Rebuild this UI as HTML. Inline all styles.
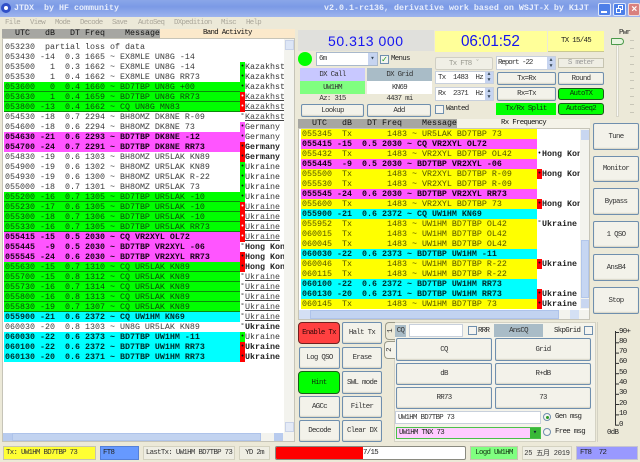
<!DOCTYPE html>
<html><head><meta charset="utf-8"><style>
*{box-sizing:border-box;margin:0;padding:0}
html{background:#ece9d8}
html,body{width:640px;height:462px;overflow:hidden}
body{position:relative;background:#ece9d8;font-family:"Liberation Mono","Noto Sans CJK SC",monospace;font-size:7.4px;letter-spacing:-.69px;color:#222;filter:blur(.3px)}
.a{position:absolute;white-space:pre}
.b{position:absolute;display:flex;align-items:center;justify-content:center;white-space:pre;border:1px solid #6f8fae;border-radius:2px;background:#f3f2ea;color:#333;box-shadow:inset 0 -1px 1px #d8d6c8}
.f{position:absolute;display:flex;align-items:center;justify-content:center;white-space:pre;color:#333}
.h{font-size:8.33px;letter-spacing:0}
.l{position:absolute;overflow:hidden;background:#fff;font-size:8.33px;letter-spacing:0}
.r{position:relative;height:10px;line-height:10px;white-space:pre;color:#444}
.r u{text-decoration:none;position:absolute;left:236px;width:5px;height:10px;text-align:center;color:#111;font-size:7px}
.r i{font-style:normal;position:absolute;left:241px;color:#333;background:#fff;padding-right:40px}
.r s{text-decoration:none;display:block;width:236px;height:10px;padding-left:1px}
.g s{background:#00ff00;box-shadow:inset 0 -1px #0a8a0a;color:#0c440c}
.g i{text-decoration:underline;color:#444}
.p s{background:#ff55ff;color:#180018;font-weight:700}
.c s{background:#00ffff;color:#002c2c;font-weight:700}
.y s{background:#ffff00;color:#555500}
.p i,.c i{font-weight:700;color:#222}
.n s{color:#3a3a3a}
.R{background:#ff0000}.G{background:#00ff00}.M{background:#ff55ff}
.cb{position:absolute;width:9px;height:9px;border:1px solid #6f8fae;background:#f4f4f0}
.rd{position:absolute;width:8px;height:8px;border-radius:50%;border:1px solid #6f8fae;background:#f5f5f0}
.m{position:absolute;top:19px;color:#aaa69a;white-space:pre;line-height:9px}
.sc{position:absolute;line-height:8px}
</style></head><body>
<div class="a" style="left:0;top:0;width:640px;height:17px;background:linear-gradient(#8aa6e8,#7b9ae6 40%,#9db4ee)"></div>
<div class="a" style="left:1px;top:3px;width:10px;height:10px;border-radius:50%;background:#fff;border:3px solid #3050c8"></div>
<div class="a h" style="left:14px;top:3px;color:#e8eefc;font-weight:700">JTDX  by HF community</div>
<div class="a h" style="left:324px;top:3px;color:#e8eefc;font-weight:700">v2.0.1-rc136, derivative work based on WSJT-X by K1JT</div>
<div class="a" style="left:598px;top:3px;width:13px;height:13px;background:#4d7fe8;border:1px solid #dfe8fb;border-radius:2px"></div>
<div class="a" style="left:601px;top:11px;width:6px;height:2px;background:#fff"></div>
<div class="a" style="left:613px;top:3px;width:13px;height:13px;background:#4d7fe8;border:1px solid #dfe8fb;border-radius:2px"></div>
<div class="a" style="left:618px;top:5px;width:5px;height:5px;border:1px solid #fff"></div>
<div class="a" style="left:616px;top:8px;width:5px;height:5px;border:1px solid #fff;background:#4d7fe8"></div>
<div class="a" style="left:628px;top:3px;width:12px;height:13px;background:#d9807e;border:1px solid #f0dada;border-radius:2px;color:#fff;font:700 10px/11px 'Liberation Sans',sans-serif;text-align:center">×</div>
<div class="m" style="left:5px">File</div><div class="m" style="left:30px">View</div><div class="m" style="left:55px">Mode</div><div class="m" style="left:80px">Decode</div><div class="m" style="left:112px">Save</div><div class="m" style="left:138px">AutoSeq</div><div class="m" style="left:174px">DXpedition</div><div class="m" style="left:221px">Misc</div><div class="m" style="left:246px">Help</div>

<div class="a" style="left:2px;top:29px;width:158px;height:9px;background:#a6a6a2"></div>
<div class="a" style="left:160px;top:29px;width:135px;height:9px;background:#fbe9cb"></div>
<div class="a h" style="left:15px;top:29px;line-height:9px;color:#111">UTC   dB   DT Freq    Message</div>
<div class="a" style="left:203px;top:29px;line-height:9px;color:#111">Band Activity</div>
<div class="a" style="left:2px;top:38px;width:293px;height:404px;background:#fff;border:1px solid #c6c4b8"></div>
<div class="l" style="left:4px;top:42px;width:280px;height:320px">
<div class="r n"><s>053230  partial loss of data</s></div>
<div class="r n"><s>053430 -14  0.3 1665 ~ EX8MLE UN8G -14</s><u class="G">•</u><i>Kazakhst</i></div>
<div class="r n"><s>053500   1  0.3 1662 ~ EX8MLE UN8G -14</s><u class="G">•</u><i>Kazakhst</i></div>
<div class="r n"><s>053530   1  0.4 1662 ~ EX8MLE UN8G RR73</s><u class="G">•</u><i>Kazakhst</i></div>
<div class="r g"><s>053600   0  0.4 1660 ~ BD7TBP UN8G +00</s><u class="R" style="color:#fff">•</u><i>Kazakhst</i></div>
<div class="r g"><s>053630   1  0.4 1659 ~ BD7TBP UN8G RR73</s><u class="R" style="color:#fff">•</u><i>Kazakhst</i></div>
<div class="r g"><s>053800 -13  0.4 1662 ~ CQ UN8G MN83</s><u>°</u><i>Kazakhst</i></div>
<div class="r n"><s>054530 -18  0.7 2294 ~ BH8OMZ DK8NE R-09</s><u class="M">•</u><i>Germany</i></div>
<div class="r n"><s>054600 -18  0.6 2294 ~ BH8OMZ DK8NE 73</s><u class="M">•</u><i>Germany</i></div>
<div class="r p"><s>054630 -21  0.6 2293 ~ BD7TBP DK8NE -12</s><u class="R">•</u><i>Germany</i></div>
<div class="r p"><s>054700 -24  0.7 2291 ~ BD7TBP DK8NE RR73</s><u class="R">•</u><i>Germany</i></div>
<div class="r n"><s>054830 -19  0.6 1303 ~ BH8OMZ UR5LAK KN89</s><u class="G">•</u><i>Ukraine</i></div>
<div class="r n"><s>054900 -19  0.6 1302 ~ BH8OMZ UR5LAK KN89</s><u class="G">•</u><i>Ukraine</i></div>
<div class="r n"><s>054930 -19  0.6 1300 ~ BH8OMZ UR5LAK R-22</s><u class="G">•</u><i>Ukraine</i></div>
<div class="r n"><s>055000 -18  0.7 1301 ~ BH8OMZ UR5LAK 73</s><u class="G">•</u><i>Ukraine</i></div>
<div class="r g"><s>055200 -16  0.7 1305 ~ BD7TBP UR5LAK -10</s><u class="R" style="color:#fff">•</u><i>Ukraine</i></div>
<div class="r g"><s>055230 -17  0.6 1305 ~ BD7TBP UR5LAK -10</s><u class="R" style="color:#fff">•</u><i>Ukraine</i></div>
<div class="r g"><s>055300 -18  0.7 1306 ~ BD7TBP UR5LAK -10</s><u class="R" style="color:#fff">•</u><i>Ukraine</i></div>
<div class="r g"><s>055330 -16  0.7 1305 ~ BD7TBP UR5LAK RR73</s><u class="R" style="color:#fff">•</u><i>Ukraine</i></div>
<div class="r p"><s>055415 -15  0.5 2030 ~ CQ VR2XYL OL72</s><u>°</u><i>Hong Kon</i></div>
<div class="r p"><s>055445  -9  0.5 2030 ~ BD7TBP VR2XYL -06</s><u class="R">•</u><i>Hong Kon</i></div>
<div class="r p"><s>055545 -24  0.6 2030 ~ BD7TBP VR2XYL RR73</s><u class="R">•</u><i>Hong Kon</i></div>
<div class="r g"><s>055630 -15  0.7 1310 ~ CQ UR5LAK KN89</s><u>°</u><i>Ukraine</i></div>
<div class="r g"><s>055700 -15  0.8 1312 ~ CQ UR5LAK KN89</s><u>°</u><i>Ukraine</i></div>
<div class="r g"><s>055730 -16  0.7 1314 ~ CQ UR5LAK KN89</s><u>°</u><i>Ukraine</i></div>
<div class="r g"><s>055800 -16  0.8 1313 ~ CQ UR5LAK KN89</s><u>°</u><i>Ukraine</i></div>
<div class="r g"><s>055830 -19  0.7 1307 ~ CQ UR5LAK KN89</s><u>°</u><i>Ukraine</i></div>
<div class="r c"><s>055900 -21  0.6 2372 ~ CQ UW1HM KN69</s><u>°</u><i>Ukraine</i></div>
<div class="r n"><s>060030 -20  0.8 1303 ~ UN8G UR5LAK KN89</s><u class="G">•</u><i>Ukraine</i></div>
<div class="r c"><s>060030 -22  0.6 2373 ~ BD7TBP UW1HM -11</s><u class="R">•</u><i>Ukraine</i></div>
<div class="r c"><s>060100 -22  0.6 2372 ~ BD7TBP UW1HM RR73</s><u class="R">•</u><i>Ukraine</i></div>
<div class="r c"><s>060130 -20  0.6 2371 ~ BD7TBP UW1HM RR73</s><u class="R">•</u><i>Ukraine</i></div>
</div>
<div class="a" style="left:284px;top:39px;width:10px;height:402px;background:#f3f3ee"></div>
<div class="a" style="left:285px;top:40px;width:9px;height:10px;background:#dde6f6;border:1px solid #c8d2e8"></div>
<div class="a" style="left:285px;top:422px;width:9px;height:10px;background:#e4eaf6;border:1px solid #c8d2e8"></div>
<div class="a" style="left:3px;top:433px;width:291px;height:8px;background:#f3f3ee"></div>
<div class="a" style="left:3px;top:433px;width:9px;height:8px;background:#b8cbee"></div>
<div class="a" style="left:12px;top:433px;width:249px;height:8px;background:#c2d3f0;border:1px solid #aec3ea"></div>
<div class="a" style="left:274px;top:433px;width:9px;height:8px;background:#b8cbee"></div>

<!-- status bar -->
<div class="f" style="left:3px;top:446px;width:93px;height:14px;background:#ffff33;border:1px solid #c6c4b0;justify-content:flex-start;padding-left:2px">Tx: UW1HM BD7TBP 73</div>
<div class="f" style="left:100px;top:446px;width:39px;height:14px;background:#6699ff;border:1px solid #5580d8;justify-content:flex-start;padding-left:2px;color:#222">FT8</div>
<div class="f" style="left:143px;top:446px;width:92px;height:14px;background:#efeee4;border:1px solid #d4d2c0">LastTx: UW1HM BD7TBP 73</div>
<div class="f" style="left:239px;top:446px;width:31px;height:14px;background:#efeee4;border:1px solid #d4d2c0">YD 2m</div>
<div class="a" style="left:275px;top:446px;width:191px;height:14px;background:#fff;border:1px solid #8a8a80;border-radius:2px;overflow:hidden"><div class="a" style="left:0;top:0;width:87px;height:12px;background:#ff0000"></div><div class="a" style="left:87px;top:2px;line-height:8px">7/15</div></div>
<div class="f" style="left:470px;top:446px;width:48px;height:14px;background:#80ff80;border:1px solid #c6c4b0;color:#113311">Logd UW1HM</div>
<div class="f" style="left:522px;top:446px;width:50px;height:14px;background:#efeee4;border:1px solid #d4d2c0;font-size:7px;letter-spacing:-.2px">25 五月 2019</div>
<div class="f" style="left:576px;top:446px;width:62px;height:14px;background:#9999ff;border:1px solid #c6c4d0;justify-content:flex-start;padding-left:3px;color:#222">FT8  72</div>

<!-- top right -->
<div class="a" style="left:298px;top:30px;width:136px;height:21px;background:#e0e0dc"></div>
<div class="a" style="left:328px;top:33px;color:#1414f0;font:14px/16px 'Liberation Sans',sans-serif;letter-spacing:.55px">50.313 000</div>
<div class="a" style="left:435px;top:31px;width:112px;height:21px;background:#ffff99"></div>
<div class="a" style="left:461px;top:33px;color:#1414f0;font:15.3px/18px 'Liberation Sans',sans-serif;letter-spacing:-.1px">06:01:52</div>
<div class="f" style="left:548px;top:31px;width:56px;height:21px;background:#ffff99;border-bottom:1px solid #c9c890;color:#222">TX 15/45</div>
<div class="a" style="left:298px;top:52px;width:14px;height:14px;border-radius:50%;background:#00ff00"></div>
<div class="f" style="left:316px;top:52px;width:62px;height:14px;background:#fff;border:1px solid #a8b8cc;justify-content:flex-start;padding-left:2px">6m</div>
<div class="a" style="left:368px;top:53px;width:9px;height:12px;background:#c6d4f0;color:#345;text-align:center;font-size:7px;line-height:12px;letter-spacing:0">▾</div>
<div class="cb" style="left:380px;top:55px;color:#1a9a1a;font:700 8px/7px 'DejaVu Sans',sans-serif;letter-spacing:0;text-align:center">✓</div>
<div class="a" style="left:391px;top:55px;line-height:8px">Menus</div>
<div class="f" style="left:300px;top:68px;width:65px;height:13px;background:#c8c8ff">DX Call</div>
<div class="f" style="left:367px;top:68px;width:65px;height:13px;background:#a9bcc7">DX Grid</div>
<div class="f" style="left:300px;top:81px;width:65px;height:13px;background:#80ff80">UW1HM</div>
<div class="f" style="left:367px;top:81px;width:65px;height:13px;background:#fff">KN69</div>
<div class="f" style="left:300px;top:94px;width:65px;height:10px">Az: 315</div>
<div class="f" style="left:367px;top:94px;width:65px;height:10px">4437 mi</div>
<div class="b" style="left:301px;top:104px;width:63px;height:13px">Lookup</div>
<div class="b" style="left:367px;top:104px;width:64px;height:13px">Add</div>
<div class="f" style="left:435px;top:57px;width:58px;height:13px;background:#f0efe6;border:1px solid #d0cfc4;border-radius:2px;color:#9a9a90">Tx FT8 ˇ</div>
<div class="f" style="left:496px;top:56px;width:60px;height:14px;background:#fff;border:1px solid #c8d0dc;justify-content:flex-start;padding-left:1px;letter-spacing:-1px">Report -22</div>
<div class="a" style="left:547px;top:57px;width:8px;height:12px;background:#c6d4f0;color:#345;font-size:5px;line-height:6px;letter-spacing:0;text-align:center">▲<br>▼</div>
<div class="f" style="left:558px;top:58px;width:46px;height:10px;background:#efeee4;border:1px solid #c6c4b0;color:#999">S meter</div>
<div class="f" style="left:435px;top:71px;width:59px;height:13px;background:#fff;border:1px solid #c8d0dc;justify-content:flex-start;padding-left:2px">Tx  1483  Hz</div>
<div class="a" style="left:485px;top:72px;width:8px;height:11px;background:#c6d4f0;color:#345;font-size:5px;line-height:5.5px;letter-spacing:0;text-align:center">▲<br>▼</div>
<div class="f" style="left:435px;top:87px;width:59px;height:14px;background:#fff;border:1px solid #c8d0dc;justify-content:flex-start;padding-left:2px">Rx  2371  Hz</div>
<div class="a" style="left:485px;top:88px;width:8px;height:12px;background:#c6d4f0;color:#345;font-size:5px;line-height:6px;letter-spacing:0;text-align:center">▲<br>▼</div>
<div class="b" style="left:497px;top:72px;width:59px;height:13px">Tx=Rx</div>
<div class="b" style="left:558px;top:72px;width:46px;height:13px">Round</div>
<div class="b" style="left:497px;top:87px;width:59px;height:14px">Rx=Tx</div>
<div class="b" style="left:558px;top:88px;width:46px;height:12px;background:#00ff00;border-color:#1a5a1a;border-radius:3px;box-shadow:none;color:#0c300c">AutoTX</div>
<div class="cb" style="left:435px;top:105px"></div>
<div class="a" style="left:446px;top:105px;line-height:8px">Wanted</div>
<div class="f" style="left:496px;top:103px;width:60px;height:12px;background:#00ff00;color:#0c300c">Tx/Rx Split</div>
<div class="b" style="left:558px;top:103px;width:46px;height:12px;background:#00ff00;border-color:#1a5a1a;border-radius:3px;box-shadow:none;color:#0c300c">AutoSeq2</div>
<div class="a" style="left:619px;top:29px;line-height:8px">Pwr</div>
<div class="a" style="left:616px;top:45px;width:3px;height:72px;background:#f8f8f4;border:1px solid #d8d6c8"></div>
<div class="a" style="left:611px;top:38px;width:13px;height:7px;background:#e8f4e0;border:1px solid #4a9a4a;border-radius:1px 4px 4px 1px"></div>
<div class="a" style="left:630px;top:40px;width:4px;height:1px;background:#c8c6b8;box-shadow:0 8px #c8c6b8,0 16px #c8c6b8,0 24px #c8c6b8,0 32px #c8c6b8,0 40px #c8c6b8,0 48px #c8c6b8,0 56px #c8c6b8,0 64px #c8c6b8,0 72px #c8c6b8"></div>

<!-- right table -->
<div class="a" style="left:298px;top:119px;width:159px;height:9px;background:#a6a6a2"></div>
<div class="a" style="left:457px;top:119px;width:133px;height:9px;background:#f4f2e8"></div>
<div class="a h" style="left:312px;top:119px;line-height:9px;color:#111">UTC   dB   DT Freq    Message</div>
<div class="a" style="left:501px;top:119px;line-height:9px;color:#111">Rx Frequency</div>
<div class="a" style="left:298px;top:128px;width:292px;height:192px;background:#fff;border:1px solid #c6c4b8"></div>
<div class="l" style="left:301px;top:129px;width:279px;height:180px">
<div class="r y"><s>055345  Tx       1483 ~ UR5LAK BD7TBP 73</s></div>
<div class="r p"><s>055415 -15  0.5 2030 ~ CQ VR2XYL OL72</s><u style="background:#fff">•</u><i>Hong Kon</i></div>
<div class="r y"><s>055432  Tx       1483 ~ VR2XYL BD7TBP OL42</s></div>
<div class="r p"><s>055445  -9  0.5 2030 ~ BD7TBP VR2XYL -06</s><u class="R">•</u><i>Hong Kon</i></div>
<div class="r y"><s>055500  Tx       1483 ~ VR2XYL BD7TBP R-09</s></div>
<div class="r y"><s>055530  Tx       1483 ~ VR2XYL BD7TBP R-09</s></div>
<div class="r p"><s>055545 -24  0.6 2030 ~ BD7TBP VR2XYL RR73</s><u class="R">•</u><i>Hong Kon</i></div>
<div class="r y"><s>055600  Tx       1483 ~ VR2XYL BD7TBP 73</s></div>
<div class="r c"><s>055900 -21  0.6 2372 ~ CQ UW1HM KN69</s><u>°</u><i>Ukraine</i></div>
<div class="r y"><s>055952  Tx       1483 ~ UW1HM BD7TBP OL42</s></div>
<div class="r y"><s>060015  Tx       1483 ~ UW1HM BD7TBP OL42</s></div>
<div class="r y"><s>060045  Tx       1483 ~ UW1HM BD7TBP OL42</s></div>
<div class="r c"><s>060030 -22  0.6 2373 ~ BD7TBP UW1HM -11</s><u class="R">•</u><i>Ukraine</i></div>
<div class="r y"><s>060046  Tx       1483 ~ UW1HM BD7TBP R-22</s></div>
<div class="r y"><s>060115  Tx       1483 ~ UW1HM BD7TBP R-22</s></div>
<div class="r c"><s>060100 -22  0.6 2372 ~ BD7TBP UW1HM RR73</s><u class="R">•</u><i>Ukraine</i></div>
<div class="r c"><s>060130 -20  0.6 2371 ~ BD7TBP UW1HM RR73</s><u class="R">•</u><i>Ukraine</i></div>
<div class="r y"><s>060145  Tx       1483 ~ UW1HM BD7TBP 73</s></div>
</div>
<div class="a" style="left:580px;top:129px;width:9px;height:180px;background:#f3f3ee"></div>
<div class="a" style="left:581px;top:130px;width:8px;height:10px;background:#c8d6f0"></div>
<div class="a" style="left:581px;top:240px;width:8px;height:58px;background:#c6d6f2;border:1px solid #b2c6ea"></div>
<div class="a" style="left:581px;top:299px;width:8px;height:9px;background:#c8d6f0"></div>
<div class="a" style="left:299px;top:310px;width:290px;height:9px;background:#f3f3ee"></div>
<div class="a" style="left:299px;top:310px;width:11px;height:9px;background:#d4e0f4"></div>
<div class="a" style="left:310px;top:310px;width:249px;height:9px;background:#c2d3f0;border:1px solid #aec3ea"></div>
<div class="a" style="left:570px;top:310px;width:9px;height:9px;background:#d4e0f4"></div>

<div class="b" style="left:593px;top:123px;width:46px;height:27px">Tune</div>
<div class="b" style="left:593px;top:156px;width:46px;height:26px">Monitor</div>
<div class="b" style="left:593px;top:188px;width:46px;height:27px">Bypass</div>
<div class="b" style="left:593px;top:221px;width:46px;height:27px">1 QSO</div>
<div class="b" style="left:593px;top:254px;width:46px;height:27px">AnsB4</div>
<div class="b" style="left:593px;top:287px;width:46px;height:27px">Stop</div>

<!-- bottom controls -->
<div class="b" style="left:298px;top:322px;width:42px;height:22px;background:#ff4040;border-color:#702020;border-radius:4px;box-shadow:none;color:#300808">Enable Tx</div>
<div class="b" style="left:342px;top:322px;width:40px;height:22px">Halt Tx</div>
<div class="b" style="left:299px;top:347px;width:41px;height:22px">Log QSO</div>
<div class="b" style="left:342px;top:347px;width:40px;height:22px">Erase</div>
<div class="b" style="left:298px;top:371px;width:42px;height:23px;background:#00ff00;border-color:#1a5a1a;border-radius:4px;box-shadow:none;color:#0c300c">Hint</div>
<div class="b" style="left:342px;top:371px;width:40px;height:23px">SWL mode</div>
<div class="b" style="left:299px;top:396px;width:41px;height:22px">AGCc</div>
<div class="b" style="left:342px;top:396px;width:40px;height:22px">Filter</div>
<div class="b" style="left:299px;top:420px;width:41px;height:22px">Decode</div>
<div class="b" style="left:342px;top:420px;width:40px;height:22px">Clear DX</div>

<div class="a" style="left:394px;top:322px;width:202px;height:120px;background:#f4f3ea;border:1px solid #d4d2c4"></div>
<div class="f" style="left:385px;top:322px;width:10px;height:18px;background:#ece9d8;border:1px solid #9a9a8a;border-right:0;border-radius:4px 0 0 4px"><span style="transform:rotate(-90deg)">1</span></div>
<div class="f" style="left:384px;top:341px;width:11px;height:18px;background:#f4f3ea;border:1px solid #9a9a8a;border-right:0;border-radius:4px 0 0 4px"><span style="transform:rotate(-90deg)">2</span></div>
<div class="f" style="left:395px;top:325px;width:11px;height:12px;background:#a9bcc7">CQ</div>
<div class="a" style="left:409px;top:324px;width:54px;height:13px;background:#fff;border:1px solid #c8d0dc"></div>
<div class="cb" style="left:468px;top:326px"></div>
<div class="a" style="left:478px;top:327px;line-height:8px">RRR</div>
<div class="f" style="left:494px;top:324px;width:49px;height:13px;background:#a9bcc7">AnsCQ</div>
<div class="a" style="left:554px;top:327px;line-height:8px">SkpGrid</div>
<div class="cb" style="left:584px;top:326px"></div>
<div class="b" style="left:396px;top:338px;width:96px;height:23px">CQ</div>
<div class="b" style="left:495px;top:338px;width:96px;height:23px">Grid</div>
<div class="b" style="left:396px;top:363px;width:96px;height:22px">dB</div>
<div class="b" style="left:495px;top:363px;width:96px;height:22px">R+dB</div>
<div class="b" style="left:396px;top:387px;width:96px;height:22px">RR73</div>
<div class="b" style="left:495px;top:387px;width:96px;height:22px">73</div>
<div class="f" style="left:395px;top:411px;width:146px;height:13px;background:#fff;border:1px solid #c8d0dc;justify-content:flex-start;padding-left:2px">UW1HM BD7TBP 73</div>
<div class="rd" style="left:543px;top:413px"></div>
<div class="a" style="left:545.5px;top:415.5px;width:3px;height:3px;border-radius:50%;background:#2a9a2a"></div>
<div class="a" style="left:555px;top:413px;line-height:8px">Gen msg</div>
<div class="f" style="left:396px;top:427px;width:145px;height:12px;background:#ffccff;border:1px solid #4ac04a;justify-content:flex-start;padding-left:2px;color:#222">UW1HM TNX 73</div>
<div class="a" style="left:530px;top:428px;width:10px;height:10px;background:#38b838;color:#123;font-size:7px;line-height:10px;letter-spacing:0;text-align:center">▾</div>
<div class="rd" style="left:543px;top:428px"></div>
<div class="a" style="left:555px;top:428px;line-height:8px">Free msg</div>

<div class="a" style="left:597px;top:322px;width:43px;height:120px;background:#ece9d8;border-left:1px solid #d4d2c4"></div>
<div class="a" style="left:615px;top:331px;width:1px;height:94px;background:#333"></div>
<div class="a" style="left:615px;top:332px;width:4px;height:1px;background:#333;box-shadow:0 10.3px #333,0 20.6px #333,0 30.9px #333,0 41.2px #333,0 51.5px #333,0 61.8px #333,0 72px #333,0 82.4px #333,0 92.7px #333"></div>
<div class="sc" style="left:619px;top:328px">90+</div>
<div class="sc" style="left:619px;top:338px">80</div>
<div class="sc" style="left:619px;top:348px">70</div>
<div class="sc" style="left:619px;top:358px">60</div>
<div class="sc" style="left:619px;top:369px">50</div>
<div class="sc" style="left:619px;top:379px">40</div>
<div class="sc" style="left:619px;top:389px">30</div>
<div class="sc" style="left:619px;top:400px">20</div>
<div class="sc" style="left:619px;top:410px">10</div>
<div class="sc" style="left:619px;top:421px">0</div>
<div class="a" style="left:607px;top:429px;line-height:9px">0dB</div>
</body></html>
